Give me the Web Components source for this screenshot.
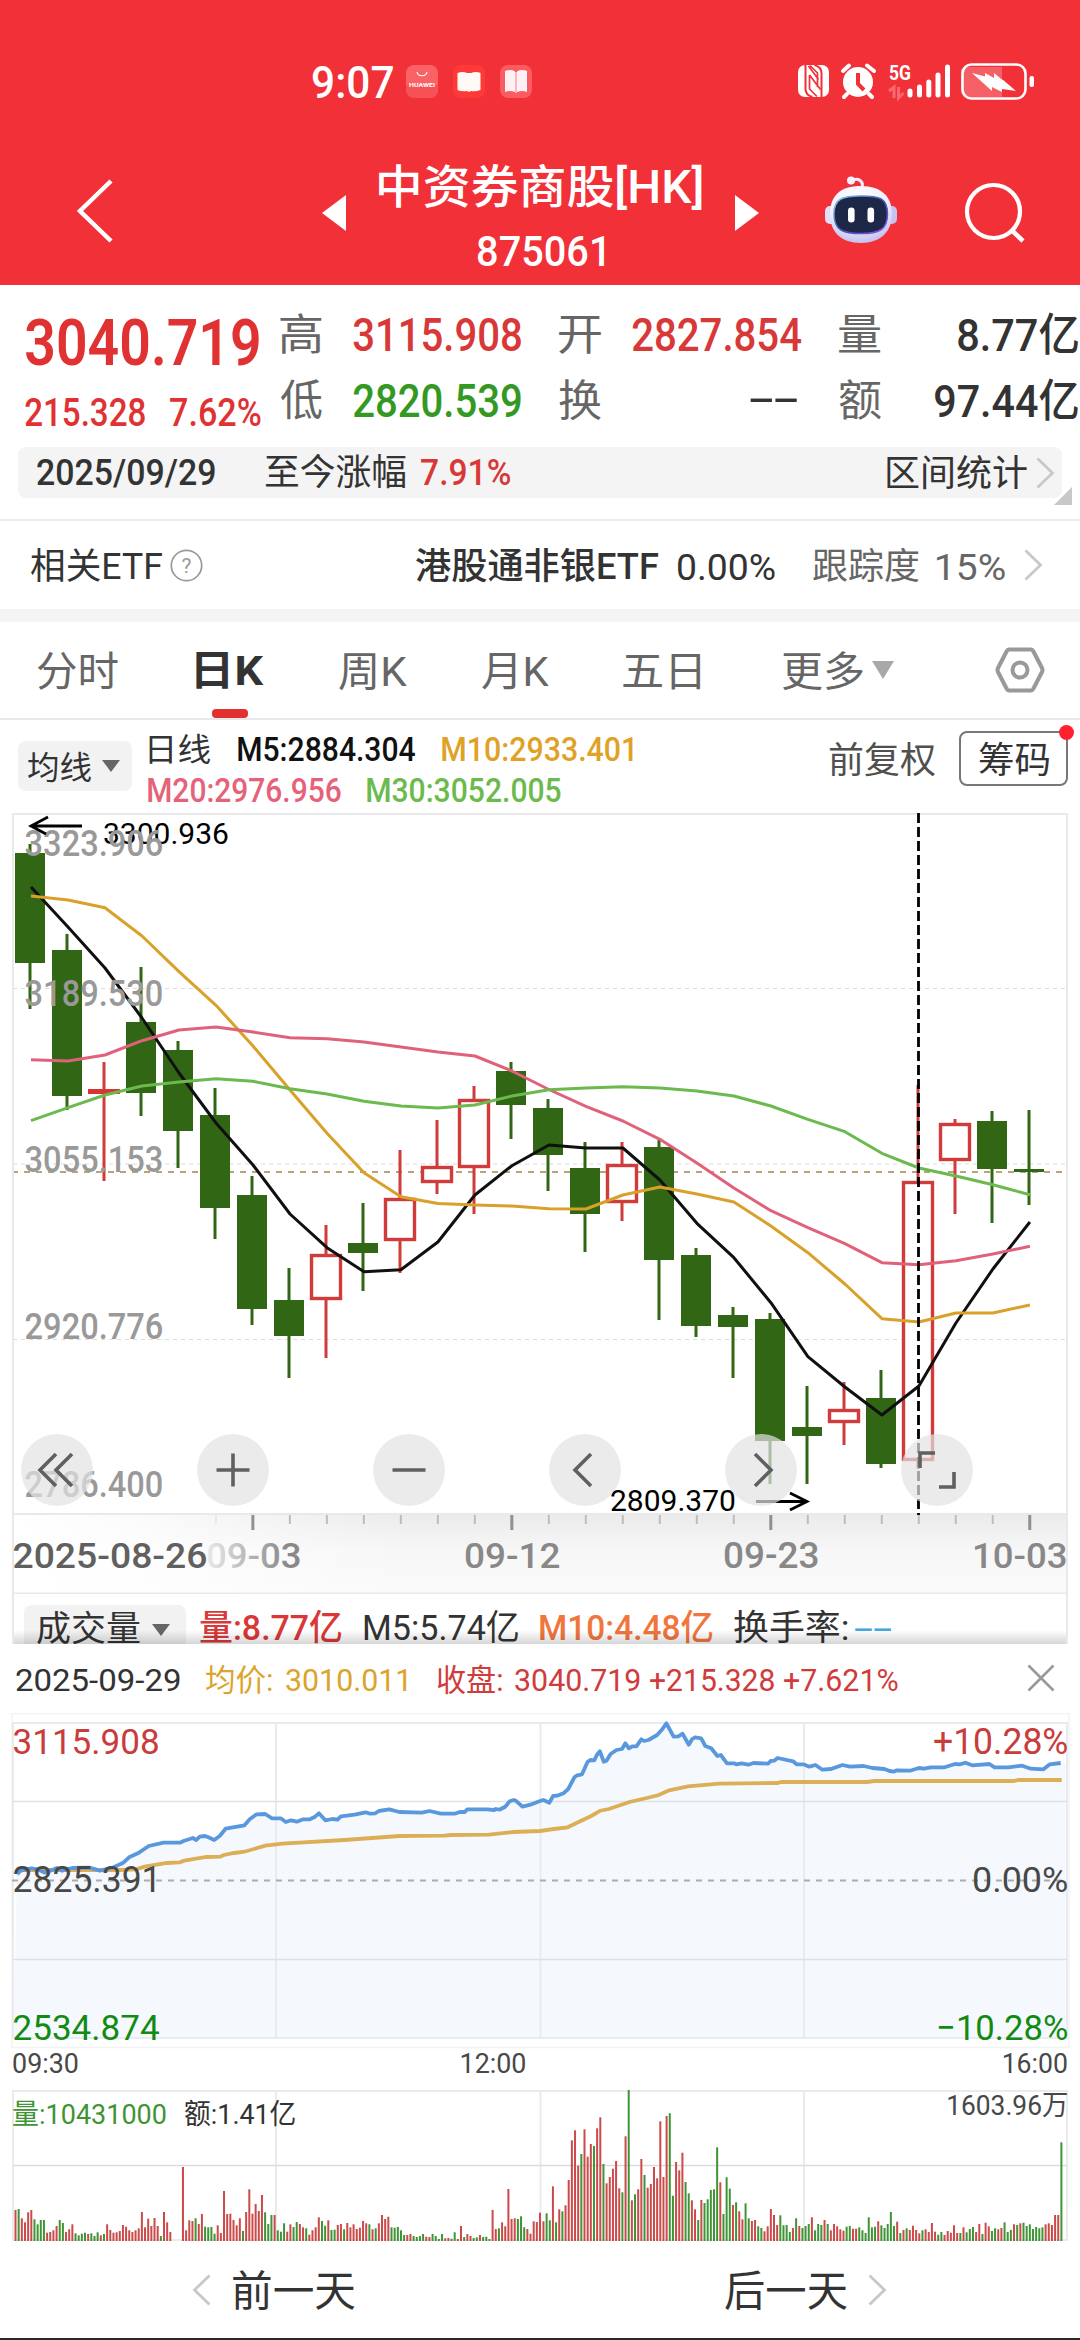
<!DOCTYPE html>
<html lang="zh-CN">
<head>
<meta charset="utf-8">
<title>中资券商股[HK]</title>
<style>
html,body{margin:0;padding:0;background:#fff}
body{width:1080px;height:2340px;overflow:hidden;font-family:Roboto,"Noto Sans CJK SC",sans-serif}
</style>
</head>
<body>
<stock-app></stock-app>
<script>
const FAMILY = 'Roboto, "Noto Sans CJK SC", sans-serif';
const pen = document.createElement('canvas').getContext('2d');

// Ink box of a text: lets a label be fitted to an exact drawn width.
function ink(text, size, weight) {
  pen.font = weight + ' ' + size + 'px ' + FAMILY;
  const m = pen.measureText(text);
  return { left: -m.actualBoundingBoxLeft, width: m.actualBoundingBoxLeft + m.actualBoundingBoxRight };
}
function svgText(text, x, y, w, size, fill, weight = 400) {
  const i = ink(text, size, weight), k = w / i.width;
  return `<text transform="translate(${x - i.left * k} ${y}) scale(${k} 1)" font-size="${size}" font-weight="${weight}" fill="${fill}">${text}</text>`;
}
function define(name, html, setup) {
  const t = document.createElement('template');
  t.innerHTML = html;
  customElements.define(name, class extends HTMLElement {
    connectedCallback() {
      if (this.shadowRoot) return;
      const root = this.attachShadow({ mode: 'open' });
      root.append(t.content.cloneNode(true));
      if (setup) setup.call(this, root);
    }
  });
}

/* label fitted to a width: w = ink width, s = font size, g = gap before it */
define('fit-text', `<style>
:host{display:block;flex:none;height:1em;line-height:1em;white-space:nowrap}
span{display:inline-block;transform-origin:0 50%;line-height:1em;white-space:pre}
</style><span></span>`, function (root) {
  const s = +this.getAttribute('s'), w = +this.getAttribute('w'), wt = this.getAttribute('b') || 400;
  const text = this.getAttribute('t'), i = ink(text, s, wt), k = w / i.width, span = root.querySelector('span');
  span.textContent = text;
  span.style.transform = `translate(${-i.left * k}px, var(--dy, 1.5px)) scaleX(${k})`;
  this.style.cssText += `;font-size:${s}px;font-weight:${wt};width:${w}px;margin-left:${this.getAttribute('g') || 0}px;color:${this.getAttribute('c') || 'inherit'}`;
});

const ICONS = {
  back: [40, 66, '<path d="M35 3 4 33 35 63" fill="none" stroke="#fff" stroke-width="4.500"/>'],
  left: [24, 36, '<path d="M24 0V36L0 18z" fill="#fff"/>'],
  right: [24, 36, '<path d="M0 0V36L24 18z" fill="#fff"/>'],
  search: [62, 62, '<circle cx="29.500" cy="29.500" r="26.500" fill="none" stroke="#fff" stroke-width="4.200"/><path d="M47.500 48 59 59" stroke="#fff" stroke-width="4.500"/>'],
  robot: [74, 68, `<defs><radialGradient id="h" cx=".45" cy=".25" r=".85"><stop offset="0" stop-color="#fff"/><stop offset=".55" stop-color="#f0effc"/><stop offset="1" stop-color="#b3b0ea"/></radialGradient><linearGradient id="v" x1="0" y1="0" x2="1" y2="1"><stop offset="0" stop-color="#8fd3ee"/><stop offset=".5" stop-color="#3a55b0"/><stop offset="1" stop-color="#8a55e0"/></linearGradient></defs>
    <rect x="1" y="30" width="12" height="18" rx="5" fill="#e2dff8"/><rect x="61" y="30" width="12" height="18" rx="5" fill="#c6c2f2"/>
    <path d="M27 5C34 1 40 5 38 12" fill="none" stroke="#f0edfc" stroke-width="3"/><circle cx="27" cy="4.500" r="4" fill="#f5f2fd"/>
    <path d="M37 10C58 10 68 21 68 38S57 67 37 67 6 56 6 38 16 10 37 10z" fill="url(#h)"/>
    <path d="M37 20C55 20 63.500 22 63.500 38S55 57.500 37 57.500 10 54 10 38 19 20 37 20z" fill="#1d2747" stroke="url(#v)" stroke-width="1.500"/>
    <rect x="24" y="31.500" width="6.600" height="15" rx="3.300" fill="#fff"/><rect x="43.500" y="31.500" width="6.600" height="15" rx="3.300" fill="#fff"/>`],
  store: [32, 33, '<rect width="32" height="33" rx="8" fill="#fb6266"/><path d="M0 20h32v5a8 8 0 0 1-8 8H8a8 8 0 0 1-8-8z" fill="#f2464c" opacity=".6"/><path d="M11 7c1 5 9 5 10 0" fill="none" stroke="#fff" stroke-width="1.200"/><text x="16" y="22" font-size="6.200" font-weight="700" fill="#fff" text-anchor="middle" textLength="26" lengthAdjust="spacingAndGlyphs">HUAWEI</text>'],
  read: [32, 33, '<rect width="32" height="33" rx="8" fill="#fe3a38"/><path d="M4.500 8Q10 6 14 8h4Q23 6 27.500 8V25Q22 27 18 26l-2 1-2-1Q9 27 4.500 25z" fill="#fffaf6"/>'],
  book: [32, 33, '<rect width="32" height="33" rx="8" fill="#fc5b60"/><path d="M5 6Q11 4 15 6.500V27Q10 25 5 27zM17 6.500Q21 4 27 6V27Q22 25 17 27z" fill="#fff0f3"/><path d="M15 7h2V28h-2z" fill="#fbb5bf"/>'],
  status: [240, 40, `<rect x="0" y="4" width="31" height="32" rx="7" fill="#fff"/><path d="M7.500 4V28q0 6 7 8M23.500 36V12q0-6-7-8" fill="none" stroke="#f13038" stroke-width="2"/><path d="M11.500 14V28L19 35.500M19.500 26V12L12 4.500M11.500 14 22.500 28.500M10.500 5 20.500 18.500" fill="none" stroke="#f13038" stroke-width="1.700"/>
    <circle cx="60" cy="21" r="15" fill="#fff"/><path d="M45 10 51 4.500M69 4.500 76 10M49 33 46 36M71 33 74 36" stroke="#fff" stroke-width="4" stroke-linecap="round"/><path d="M60 12V23L66 29" fill="none" stroke="#f13038" stroke-width="4"/>
    <text x="91" y="19" font-size="21" font-weight="700" fill="#fff" textLength="22" lengthAdjust="spacingAndGlyphs">5G</text>
    <path d="M91 30 96 26V37M100.500 26V37L105.500 32" fill="none" stroke="#f8686e" stroke-width="3"/>
    <path d="M112 30V34M121.500 26V34M130.800 21V34M140 14V34M149.500 6V34" stroke="#fff" stroke-width="5" stroke-linecap="round"/>
    <path d="M167 6h37v30h-37q-4-2-4-6V10q0-3 4-4z" fill="#f56066"/><rect x="164.500" y="3.500" width="63" height="34" rx="9" fill="none" stroke="#fff" stroke-width="2.600"/><rect x="231.500" y="15" width="4.500" height="11" rx="2" fill="#fff"/><path d="M174 12 187 15.500 187 12 196 17 196 12 205 19.500 204 18 218 30 204 28 204 31 194 26 194 30z" fill="#fff"/>`],
  chev: [18, 32, '<path d="M1.500 1.500 16.500 16 1.500 30.500" fill="none" stroke="#c8c8c8" stroke-width="2.800"/>'],
  chevl: [18, 32, '<path d="M16.500 1.500 1.500 16 16.500 30.500" fill="none" stroke="#c8c8c8" stroke-width="2.800"/>'],
  help: [33, 33, '<circle cx="16.500" cy="16.500" r="15.200" fill="none" stroke="#999" stroke-width="1.700"/><text x="16.500" y="24" font-size="21" fill="#999" text-anchor="middle">?</text>'],
  down: [22, 18, '<path d="M0 0H22L11 18z" fill="#a8a8a8"/>'],
  downd: [18, 12, '<path d="M0 0H18L9 12z" fill="#666"/>'],
  hex: [50, 46, '<path d="M14 2.500H36Q37.500 2.500 38.200 4L47 21Q48 23 47 25L38.200 42Q37.500 43.500 36 43.500H14Q12.500 43.500 11.800 42L3 25Q2 23 3 21L11.800 4Q12.500 2.500 14 2.500z" fill="none" stroke="#999" stroke-width="4"/><circle cx="25" cy="23" r="7.500" fill="none" stroke="#999" stroke-width="4"/>'],
  close: [28, 28, '<path d="M1.500 1.500 26.500 26.500M26.500 1.500 1.500 26.500" stroke="#999" stroke-width="2.600"/>']
};
define('ui-icon', `<style>:host{display:block;flex:none}svg{display:block;overflow:visible;font-family:Roboto,sans-serif}</style><div></div>`, function (root) {
  const [w, h, body] = ICONS[this.getAttribute('n')];
  root.querySelector('div').innerHTML = `<svg width="${w}" height="${h}" viewBox="0 0 ${w} ${h}">${body}</svg>`;
  this.style.width = w + 'px';
  if (this.hasAttribute('g')) this.style.marginLeft = this.getAttribute('g') + 'px';
});

define('status-bar', `<style>:host{display:flex;align-items:center;height:162px;color:#fff;--dy:.5px}ui-icon[n=status]{margin:0 42px 0 auto}</style>
<fit-text g="313" w="80" s="45" b="500" t="9:07"></fit-text>
<ui-icon n="store" g="13"></ui-icon><ui-icon n="read" g="15"></ui-icon><ui-icon n="book" g="15"></ui-icon>
<ui-icon n="status"></ui-icon>`);

define('nav-bar', `<style>:host{display:flex;align-items:flex-start;height:123px;color:#fff}
.t{width:323px;margin-left:33px;height:123px;display:flex;flex-direction:column;align-items:center}
.t fit-text+fit-text{margin-top:21px}</style>
<ui-icon n="back" g="76" style="margin-top:16px"></ui-icon>
<ui-icon n="left" g="206" style="margin-top:33px"></ui-icon>
<div class="t"><fit-text w="323" s="46" b="500" t="中资券商股[HK]"></fit-text><fit-text w="126" s="42" b="500" t="875061"></fit-text></div>
<ui-icon n="right" g="33" style="margin-top:33px"></ui-icon>
<ui-icon n="robot" g="65" style="margin-top:14px"></ui-icon>
<ui-icon n="search" g="66" style="margin-top:20px"></ui-icon>`);

define('quote-panel', `<style>
:host{display:flex;height:162px;color:#333}
.p{width:280px;padding-top:24px;height:138px;color:#e03232}
.p div{display:flex;margin-top:18px}
.g{padding-top:15px;display:flex;flex-direction:column;width:800px}
.g div{display:flex;align-items:center;height:66px}
</style>
<div class="p"><fit-text g="26" w="233" s="65" b="600" t="3040.719"></fit-text>
<div><fit-text g="25" w="120" s="38" b="500" t="215.328"></fit-text><fit-text g="25" w="91" s="38" b="500" t="7.62%"></fit-text></div></div>
<div class="g">
<div><fit-text w="42" s="43" c="#666" t="高"></fit-text><fit-text g="31" w="168" s="46" b="500" c="#d83838" t="3115.908"></fit-text><fit-text g="38" w="42" s="43" c="#666" t="开"></fit-text><fit-text g="31" w="169" s="46" b="500" c="#d83838" t="2827.854"></fit-text><fit-text g="38" w="42" s="43" c="#666" t="量"></fit-text><fit-text g="77" w="120" s="45" b="500" t="8.77亿"></fit-text></div>
<div><fit-text w="42" s="43" c="#666" t="低"></fit-text><fit-text g="31" w="168" s="46" b="500" c="#339922" t="2820.539"></fit-text><fit-text g="38" w="42" s="43" c="#666" t="换"></fit-text><fit-text g="148" w="48" s="46" t="--" style="--dy:-1px"></fit-text><fit-text g="42" w="42" s="43" c="#666" t="额"></fit-text><fit-text g="54" w="143" s="45" b="500" t="97.44亿"></fit-text></div>
</div>`);

define('range-bar', `<style>:host{display:block;height:72px;color:#333;border-bottom:2px solid #ececec;position:relative;--dy:-.5px}
.b{display:flex;align-items:center;height:51px;margin:0 18px;background:#f4f4f4;border-radius:8px;box-sizing:border-box;padding-top:1px}
i{position:absolute;left:1054px;top:40px;width:18px;height:18px;background:#c8c8c8;clip-path:polygon(100% 0,100% 100%,0 100%)}
.s{margin-left:auto;margin-right:8px;display:flex;align-items:center;--dy:1px}</style>
<div class="b"><fit-text g="19" w="178" s="36" b="500" t="2025/09/29"></fit-text><fit-text g="50" w="141" s="36" t="至今涨幅"></fit-text><fit-text g="15" w="89" s="36" b="500" c="#d83838" t="7.91%"></fit-text>
<div class="s"><fit-text w="140" s="36" t="区间统计"></fit-text><ui-icon n="chev" g="9"></ui-icon></div></div><i></i>`);

define('etf-row', `<style>:host{display:flex;align-items:center;height:89px;color:#333;border-bottom:13px solid #f4f4f4}</style>
<fit-text g="31" w="131" s="36" t="相关ETF"></fit-text><ui-icon n="help" g="8"></ui-icon>
<fit-text g="213" w="242" s="36" b="500" t="港股通非银ETF"></fit-text><fit-text g="20" w="97" s="37" t="0.00%"></fit-text>
<fit-text g="38" w="106" s="36" c="#666" t="跟踪度"></fit-text><fit-text g="18" w="68" s="37" c="#666" t="15%"></fit-text><ui-icon n="chev" g="19"></ui-icon>`);

define('period-tabs', `<style>:host{display:flex;align-items:center;height:96px;color:#666;border-bottom:2px solid #e8e8e8}
.on{display:flex;flex-direction:column;align-items:center;height:96px;margin-left:78px;color:#333}
.on fit-text{margin-top:27px}.on i{width:36px;height:9px;border-radius:4px;background:#e23030;margin-top:auto}</style>
<fit-text g="37" w="81" s="41" t="分时"></fit-text><div class="on"><fit-text w="68" s="41" b="700" t="日K"></fit-text><i></i></div>
<fit-text g="75" w="68" s="41" t="周K"></fit-text><fit-text g="75" w="67" s="41" t="月K"></fit-text><fit-text g="74" w="78" s="41" t="五日"></fit-text>
<fit-text g="81" w="81" s="41" t="更多"></fit-text><ui-icon n="down" g="9"></ui-icon><ui-icon n="hex" g="101"></ui-icon>`);

define('ma-legend', `<style>:host{display:flex;height:93px;position:relative}
.c{display:flex;align-items:center;width:114px;height:50px;margin:21px 0 0 18px;background:#f2f2f2;border-radius:8px;color:#333}
.m{margin-left:16px;padding-top:8px;width:681px;--dy:.5px}.m div{display:flex;align-items:center;height:41px}
.f{margin-top:21px}
.b{box-sizing:border-box;width:109px;height:55px;margin:11px 0 0 24px;border:2px solid #777;border-radius:8px;display:flex;align-items:center;justify-content:center;color:#333}
i{position:absolute;left:1059px;top:5px;width:15px;height:15px;border-radius:50%;background:#ff2030}</style>
<div class="c"><fit-text g="10" w="63" s="32" t="均线"></fit-text><ui-icon n="downd" g="11"></ui-icon></div>
<div class="m"><div><fit-text g="1" w="61" s="32" c="#333" t="日线"></fit-text><fit-text g="28" w="177" s="33" b="500" c="#111" t="M5:2884.304"></fit-text><fit-text g="27" w="191" s="33" b="500" c="#dfa126" t="M10:2933.401"></fit-text></div>
<div><fit-text w="193" s="33" b="500" c="#e5637a" t="M20:2976.956"></fit-text><fit-text g="26" w="194" s="33" b="500" c="#6cba4e" t="M30:3052.005"></fit-text></div></div>
<fit-text class="f" w="106" s="36" c="#505050" t="前复权"></fit-text>
<div class="b"><fit-text w="70" s="36" t="筹码"></fit-text></div><i></i>`);

/* Daily candles: colour, high, body top, body bottom, low (canvas y) */
const CANDLES = [['g',844,853,963,1009],['g',934,950,1096,1110],['r',1062,1090,1094,1181],['g',967,1022,1093,1116],['g',1041,1050,1131,1168],['g',1088,1115,1208,1239],['g',1176,1195,1309,1325],['g',1268,1300,1336,1378],['r',1225,1254,1300,1358],['g',1203,1243,1253,1291],['r',1150,1198,1241,1273],['r',1120,1166,1183,1194],['r',1086,1099,1168,1214],['g',1062,1071,1105,1139],['g',1099,1108,1155,1191],['g',1142,1168,1214,1252],['r',1142,1164,1203,1221],['g',1140,1147,1260,1320],['g',1248,1255,1326,1337],['g',1307,1315,1327,1378],['g',1313,1319,1441,1484],['g',1386,1427,1436,1484],['r',1382,1409,1423,1445],['g',1370,1398,1464,1468],['r',1085,1181,1461,1469],['r',1119,1123,1161,1214],['g',1111,1121,1169,1223],['g',1110,1169,1172,1205]];
const MA = [
  ['#101010', [887,927,968,1018,1073,1123,1165,1214,1247.7,1271.7,1269.7,1242,1195,1165.7,1145,1148,1148,1180,1223.3,1257.7,1302.7,1356.7,1387,1415,1386,1323,1269,1222]],
  ['#d9a02a', [896,900,907.7,936,971.7,1005.3,1046,1090,1133.3,1172.7,1196.7,1203.5,1205,1206,1208.7,1209,1195,1187,1194,1202,1226,1252.7,1284,1318.7,1322,1313,1313,1305]],
  ['#e0627a', [1059.7,1061,1055,1040.7,1030,1027,1032,1037.7,1038.7,1042,1047,1052,1056,1071,1089.5,1106.3,1121,1139.3,1163,1188,1210.7,1227.7,1243.7,1262.7,1264.7,1260.7,1254,1246.3]],
  ['#6cb94e', [1120.7,1107.7,1095,1086,1082,1078.7,1081.3,1088.7,1094,1101.3,1106,1108,1105,1096,1089.7,1088,1086.7,1088,1091,1096,1106,1119.3,1131.7,1153.3,1168,1176,1184.7,1194.7]]
];
define('k-chart', `<style>:host{display:block;height:781px}svg{display:block;font-family:Roboto,"Noto Sans CJK SC",sans-serif}</style><div></div>`, function (root) {
  const X = i => 30.4 + 36.995 * i;
  let s = `<defs><linearGradient id="band" x1="0" x2="0" y1="0" y2="1"><stop offset="0" stop-color="#ebebeb"/><stop offset=".45" stop-color="#f7f7f7"/><stop offset="1" stop-color="#fafafa"/></linearGradient>
  <linearGradient id="fade" x1="0" x2="1"><stop offset="0" stop-color="#fff"/><stop offset=".3" stop-color="#fff" stop-opacity=".8"/><stop offset="1" stop-color="#fff" stop-opacity="0"/></linearGradient>
  <linearGradient id="fd" gradientUnits="userSpaceOnUse" x1="0" x2="95"><stop offset="0" stop-color="#888" stop-opacity=".15"/><stop offset=".85" stop-color="#888"/></linearGradient></defs>
  <rect x="12" y="1515" width="1055" height="79" fill="url(#band)"/><rect x="11" y="1515" width="400" height="79" fill="url(#fade)"/>`;
  for (const y of [988.5, 1164, 1339.5]) s += `<path d="M13 ${y}H1066" stroke="#dcdcdc" stroke-width="1.200" stroke-dasharray="4 4"/>`;
  s += `<path d="M12 1172H1066" stroke="#b8a478" stroke-width="1.800" stroke-dasharray="6 6"/>`;
  CANDLES.forEach(([c, h, a, b, l], i) => {
    const x = Math.round(X(i));
    if (c === 'g') s += `<path d="M${x} ${h}V${l}" stroke="#306614" stroke-width="3"/><rect x="${x - 15}" y="${a}" width="30" height="${b - a}" fill="#306614"/>`;
    else {
      s += `<path d="M${x} ${h}V${a}M${x} ${b}V${l}" stroke="#d03c3c" stroke-width="3"/>`;
      s += b - a < 6 ? `<rect x="${x - 16}" y="${a - 1}" width="32" height="5" fill="#d83434"/>`
        : `<rect x="${x - 14.5}" y="${a + 1.5}" width="29" height="${b - a - 3}" fill="#fff" stroke="#d03c3c" stroke-width="3.400"/>`;
    }
  });
  for (const [c, ys] of MA) s += `<polyline points="${ys.map((y, i) => (X(i) + .6).toFixed(1) + ',' + y).join(' ')}" fill="none" stroke="${c}" stroke-width="3" stroke-linejoin="round"/>`;
  s += `<path d="M13 1594V814H1067V1594M13 1514H1067M13 1593.500H1067" fill="none" stroke="#e9e9e9" stroke-width="2"/>`;
  s += svgText('3300.936', 104, 843.5, 124, 30, '#000');
  [['3323.906', 856], ['3189.530', 1006], ['3055.153', 1172], ['2920.776', 1338.5], ['2786.400', 1497]].forEach(([t, y]) => s += svgText(t, 25.5, y, 136.5, 36, '#999', 500));
  s += `<path d="M82 826H32M48 817 31 826 46 834" fill="none" stroke="#000" stroke-width="2.800"/>`;
  s += svgText('2809.370', 611, 1510.5, 124, 30, '#000');
  s += `<path d="M756 1501.500H806M790 1493 807 1501.500 790 1510" fill="none" stroke="#000" stroke-width="2.800"/>`;
  s += `<path d="M918.500 813V1515" stroke="#000" stroke-width="2.800" stroke-dasharray="10 4"/>`;
  const glyph = ['M-1-16-17 0-1 16M15-16-1 0 15 16', 'M-16.500 0H16.500M0-16.500V16.500', 'M-16.500 0H16.500', 'M6-16-10 0 6 16', 'M-6-16 10 0-6 16', 'M-17-2V-17H-2M2 17H17V2'];
  glyph.forEach((d, k) => {
    const x = 57 + 176 * k;
    s += `<circle cx="${x}" cy="1470" r="36" fill="rgb(227,227,227)" fill-opacity=".7"/><path transform="translate(${x} 1470)" d="${d}" fill="none" stroke="#606060" stroke-width="3.600"/>`;
  });
  for (let i = 5; i < 28; i++) {
    const big = (i - 6) % 7 === 0;
    s += `<path d="M${X(i) + .5} 1515V${big ? 1530 : 1524}" stroke="${big ? '#909090' : i === 5 ? '#e8e8e8' : '#bdbdbd'}" stroke-width="${big ? 3 : 2}"/>`;
  }
  s += svgText('2025-08-26', 13.5, 1568, 192.5, 36, '#606060', 500);
  s += svgText('09-03', 207, 1568, 93, 36, 'url(#fd)', 500) + svgText('09-12', 465, 1568, 95, 36, '#888', 500) + svgText('09-23', 724, 1568, 94, 36, '#888', 500) + svgText('10-03', 974, 1568, 92, 36, '#888', 500);
  root.querySelector('div').innerHTML = `<svg width="1080" height="781" viewBox="0 813 1080 781">${s}</svg>`;
});

define('volume-strip', `<style>:host{display:flex;align-items:flex-start;height:50px;overflow:hidden;position:relative;margin:0 12px;border-left:2px solid #e9e9e9;border-right:2px solid #e9e9e9;box-sizing:border-box;color:#333;--dy:0px}
.c{display:flex;align-items:center;height:50px;width:162px;margin:11px 0 0 10px;background:#f2f2f2;border-radius:8px}
.c fit-text{--dy:-1px}
fit-text.d{margin-top:17px}
i{position:absolute;left:0;right:0;bottom:0;height:14px;background:linear-gradient(rgba(0,0,0,0),rgba(0,0,0,.16))}</style>
<div class="c"><fit-text g="13" w="103" s="35" t="成交量"></fit-text><ui-icon n="downd" g="12"></ui-icon></div>
<fit-text class="d" g="14" w="142" s="35" b="500" c="#d83838" t="量:8.77亿"></fit-text><fit-text class="d" g="22" w="154" s="35" t="M5:5.74亿"></fit-text>
<fit-text class="d" g="22" w="173" s="35" b="500" c="#f0763e" t="M10:4.48亿"></fit-text><fit-text class="d" g="21" w="114" s="35" t="换手率:"></fit-text><fit-text class="d" g="6" w="37" s="35" c="#4aa6e0" t="--"></fit-text><i></i>`);

define('day-header', `<style>:host{display:flex;align-items:center;height:69px;color:#d03c3c}ui-icon{margin-left:auto;margin-right:25px}</style>
<fit-text g="16" w="164" s="31" c="#333" t="2025-09-29"></fit-text><fit-text g="26" w="66" s="31" c="#dba42c" t="均价:"></fit-text><fit-text g="14" w="121" s="31" c="#dba42c" t="3010.011"></fit-text>
<fit-text g="30" w="65" s="31" t="收盘:"></fit-text><fit-text g="13" w="125" s="31" t="3040.719"></fit-text><fit-text g="10" w="124" s="31" t="+215.328"></fit-text><fit-text g="10" w="114" s="31" t="+7.621%"></fit-text>
<ui-icon n="close"></ui-icon>`);

/* Minute lines on a 3136-unit wide, one-third pixel high grid */
const PRICE = '50,702 60,692 90,685 110,688 130,698 150,691 165,684 180,692 210,684 260,683 290,692 330,682 358,668 375,652 400,640 432,618 475,608 522,608 535,602 560,594 570,600 580,590 595,588 605,592 622,600 638,588 655,566 710,556 725,538 745,523 770,522 790,535 815,535 830,546 845,541 862,545 880,538 900,538 915,530 926,520 945,541 965,537 980,539 990,529 1030,524 1062,517 1075,521 1090,520 1100,513 1130,508 1160,516 1225,518 1247,513 1280,521 1320,521 1335,516 1350,516 1357,508 1415,508 1435,510 1440,507 1450,509 1467,500 1480,484 1492,480 1500,484 1517,500 1540,494 1568,483 1578,480 1595,488 1606,468 1618,467 1636,460 1650,447 1668,412 1676,406 1690,403 1706,366 1714,360 1726,361 1733,345 1742,334 1753,365 1761,362 1773,342 1790,330 1806,327 1816,310 1826,325 1836,319 1848,319 1862,298 1870,303 1883,300 1908,285 1923,268 1935,250 1956,290 1970,289 1982,281 2000,314 2010,297 2018,292 2036,295 2048,318 2065,325 2083,348 2093,345 2111,370 2133,370 2138,373 2153,370 2173,374 2188,369 2230,371 2238,363 2248,362 2258,354 2303,364 2313,373 2333,373 2350,380 2368,375 2388,389 2413,387 2446,375 2468,380 2508,378 2533,384 2568,387 2583,393 2596,395 2603,391 2643,392 2668,384 2683,386 2703,382 2743,382 2773,372 2788,373 2803,368 2823,376 2873,372 2888,382 2928,382 2968,377 2993,386 3030,388 3048,373 3080,369';
const AVG = '50,690 240,690 350,690 395,688 420,680 485,669 522,667 535,662 600,651 640,650 650,645 680,639 710,635 770,617 820,611 1000,600 1160,588 1290,587 1310,585 1420,584 1490,576 1568,573 1608,567 1648,562 1668,552 1718,527 1743,512 1768,507 1828,486 1878,474 1913,465 1943,451 1998,439 2088,431 2258,429 2268,426 2518,426 2538,423 2943,423 2958,420 3083,420';
const toPx = (str, top) => str.split(' ').map(p => { const [x, y] = p.split(','); return (x * 1080 / 3136).toFixed(1) + ',' + (top + y / 3).toFixed(1); });
define('day-chart', `<style>:host{display:block;height:377px}svg{display:block;font-family:Roboto,"Noto Sans CJK SC",sans-serif}</style><div></div>`, function (root) {
  const p = toPx(PRICE, 1640), a = toPx(AVG, 1640);
  let s = `<polygon points="13,2038 17,1874 ${p.join(' ')} 1067,1763 1067,2038" fill="#f5f9fe"/>
  <path d="M12 1713.500H1069V2047.500H12z" fill="none" stroke="#f3f3f3" stroke-width="1.500"/>
  <path d="M13 1723H1067V2038H13zM276 1723V2038M540.500 1723V2038M804 1723V2038" fill="none" stroke="#e9ebee" stroke-width="2"/>
  <path d="M13 1801.500H1067M13 1959.500H1067" stroke="#dfe2e5" stroke-width="1.300"/>
  <path d="M12 1880.500H1067" stroke="#aaadb0" stroke-width="1.800" stroke-dasharray="6 6"/>
  <polyline points="${a.join(' ')}" fill="none" stroke="#dcae56" stroke-width="3.800"/>
  <polyline points="${p.join(' ')}" fill="none" stroke="#5a98de" stroke-width="3.800" stroke-linejoin="round"/>`;
  s += svgText('3115.908', 13.5, 1754, 145, 36, '#c83c3c') + svgText('2825.391', 13.5, 1892, 141, 36, '#484848') + svgText('2534.874', 13.5, 2040, 146, 36, '#128a14');
  s += svgText('+10.28%', 934, 1754, 133, 36, '#c83c3c') + svgText('0.00%', 974, 1892, 93, 36, '#484848') + svgText('−10.28%', 938, 2040, 129, 36, '#128a14');
  s += svgText('09:30', 13, 2073, 65, 28.5, '#484848') + svgText('12:00', 461.5, 2073, 64, 28.5, '#484848') + svgText('16:00', 1003.5, 2073, 63.5, 28.5, '#484848');
  root.querySelector('div').innerHTML = `<svg width="1080" height="377" viewBox="0 1713 1080 377">${s}</svg>`;
});

/* Minute volume tops, bar by bar; a trailing g marks a falling minute, 0 is an empty one */
const V1 = '450 447g 475 487 457 450 478g 493g 480g 480g 518 516 511 498 480g 489g 516 508 493 520g 526g 521g 518g 522 520g 528g 517g 526 522g 493 510 518 517 513 495 500 511 516 511 505 456 502 476 498 474 498 528g 456 487 516 0 0 0 321 511 481 483 475g 492 462 500g 502g 501g 521g 496 519 393 462 461 480 496 475 513g 456 388 461 432 453 405 457g 492g 465g 465 511g 515g 490g 515 493 501g 486g 492 502 505g 524 511 502 472 483g 497g 481 510g 509g 495 492 508g 489 502 493 507 503 483 490 493g 508 505g 490 465 477 470 502g 503g 501g 511g 525g 525 522 528g 531g 528g 522g 530 531 522g 528g 537g 522g 535 534 536g 517g 537 498 531g 522 528 534g 532g 525 531g 530g 537g 450 507 505g 487 499 387 477 475 477g 469g 502g 507 521 484 486 458';
const V2 = '484 460g 481g 379 487g 448 454g 436 360 241 211 317 282g 208 290 252 258g 205 172 312g 370 351 326 303 385 397g 229 90g 421 403g 388 297 345g 383 372 321 355 184 351 168 160g 407g 306 331 278 366g 400g 421 448 480g 420 429g 418g 390g 388g 262g 367 462g 352g 386g 435 427g 454 478 430g 475g 483 480 499g 504g 514 499 447 465 495 466g 496g 495g 516g 504 475g 498 504g 498g 492g 472 511g 492g 495g 480 492g 511 492 499 508 512 500g 498g 506 506 502g 511g 519g 472g 502g 500g 484 496g 504g 492g 456g 498g 485 519g 510 505g 510 497 510 520 511g 508 516 489 515 524g 516g 525 513 518 496 519 519g 502 517g 507g 501g 516 492 522g 488 499 513g 505g 508 504 487g 516g 510g 493 495g 490 488g 498g 493g 507g 501g 505g 502g 493 490 495 465 465 247g';
define('volume-chart', `<style>:host{display:block;height:153px}svg{display:block;font-family:Roboto,"Noto Sans CJK SC",sans-serif}</style><div></div>`, function (root) {
  let s = `<path d="M13 2091H1067V2240H13zM276 2091V2240M540.500 2091V2240M804 2091V2240" fill="none" stroke="#ebebeb" stroke-width="2"/><path d="M13 2165.500H1067" stroke="#dcdcdc" stroke-width="1.300"/>`;
  const bars = (str, x0, x1) => {
    const v = str.split(' '), step = (x1 - x0) / (v.length - 1);
    v.forEach((t, i) => {
      const y = parseInt(t);
      if (!y) return;
      s += `<rect x="${((x0 + i * step) * 1080 / 3136 - 1).toFixed(2)}" y="${(2060 + y / 3).toFixed(1)}" width="2" height="${((543 - y) / 3).toFixed(1)}" fill="${t.endsWith('g') ? '#3f9436' : '#cc4a4a'}"/>`;
    });
  };
  bars(V1, 45, 1568); bars(V2, 1578, 3082);
  s += svgText('量:10431000', 13, 2124, 153, 28.5, '#3f9436') + svgText('额:1.41亿', 185, 2124, 110, 28.5, '#333') + svgText('1603.96万', 948, 2115, 119, 28.5, '#484848');
  root.querySelector('div').innerHTML = `<svg width="1080" height="153" viewBox="0 2090 1080 153">${s}</svg>`;
});

define('day-pager', `<style>:host{display:flex;align-items:center;height:95px;color:#333;border-bottom:2px solid #2a2a2a}</style>
<ui-icon n="chevl" g="193"></ui-icon><fit-text g="22" w="122" s="42" t="前一天"></fit-text><fit-text g="370" w="122" s="42" t="后一天"></fit-text><ui-icon n="chev" g="21"></ui-icon>`);

define('stock-app', `<style>:host{display:flex;flex-direction:column;width:1080px;height:2340px;background:#fff;overflow:hidden}
header{background:#f13038;height:285px;flex:none}
section{background:#fff}</style>
<header><status-bar></status-bar><nav-bar></nav-bar></header>
<quote-panel></quote-panel><range-bar></range-bar><etf-row></etf-row><period-tabs></period-tabs><ma-legend></ma-legend>
<k-chart></k-chart><volume-strip></volume-strip>
<section><day-header></day-header><day-chart></day-chart><volume-chart></volume-chart><day-pager></day-pager></section>`);
</script>
</body>
</html>
